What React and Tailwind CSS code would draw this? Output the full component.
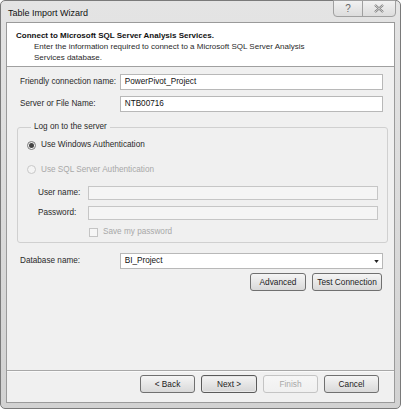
import { useState } from "react";

const font = { fontFamily: '"Liberation Sans", Arial, sans-serif' };

function Btn({ children, w, disabled, focus }) {
  return (
    <button
      className={`h-[18px] ${w} whitespace-nowrap rounded-[3px] border text-[8.3px] leading-none bg-gradient-to-b ${
        disabled
          ? "border-[#c4c4c4] from-[#f6f6f6] to-[#f0f0f0] text-[#a8a8a8]"
          : focus
          ? "border-[#5a5a5a] from-[#f4f4f4] to-[#d6d6d6] text-[#222] shadow-[inset_0_0_0_1px_#e8e8e8]"
          : "border-[#707070] from-[#f5f5f5] to-[#d9d9d9] text-[#222]"
      }`}
    >
      {children}
    </button>
  );
}

function Field({ label, value, combo }) {
  return (
    <div className="flex items-center pl-[3px]">
      <span className="w-[100px] whitespace-nowrap text-[8.2px] text-[#2a2a2a]">{label}</span>
      <div className="flex h-[16px] w-[264px] items-center border border-[#b8b8b8] bg-white pl-[4px] pr-[3px] text-[8.2px] text-[#111]">
        <span className="flex-1">{value}</span>
        {combo && (
          <svg width="5" height="3" viewBox="0 0 6 4">
            <path d="M0 0h6L3 4z" fill="#222" />
          </svg>
        )}
      </div>
    </div>
  );
}

export default function App() {
  const [auth, setAuth] = useState("windows");

  return (
    <div className="h-[412px] w-[403px] bg-white" style={font}>
      <div className="flex h-[409px] w-[401px] flex-col rounded-[5px] border border-[#7a7a7a] bg-gradient-to-b from-[#e4e4e4] to-[#d2d2d2] px-[5px] pb-[5px]">
        {/* Title bar */}
        <div className="flex h-[21px] items-start">
          <span className="mt-[6px] ml-[2px] flex-1 text-[9px] text-[#111]">Table Import Wizard</span>
          <div className="-mt-px mr-[-1px] flex h-[17px] overflow-hidden rounded-b-[4px] border border-[#a0a0a0] bg-gradient-to-b from-[#f2f2f2] to-[#dcdcdc]">
            <div className="flex w-[29px] items-center justify-center border-r border-[#a0a0a0] text-[10px] text-[#666]">
              ?
            </div>
            <div className="flex w-[32px] items-center justify-center">
              <svg width="10" height="9" viewBox="0 0 10 9">
                <path d="M1 1l8 7M9 1L1 8" stroke="#777" strokeWidth="2.2" />
                <path d="M1 1l8 7M9 1L1 8" stroke="#eee" strokeWidth="0.8" />
              </svg>
            </div>
          </div>
        </div>

        {/* Client */}
        <div className="flex flex-1 flex-col border border-[#9a9a9a] bg-[#f0f0f0]">
          <div className="h-[44px] border-b border-[#a0a0a0] bg-white pt-[7px] pl-[9px] text-[8px] leading-[11px] text-[#111]">
            <div className="font-bold">Connect to Microsoft SQL Server Analysis Services.</div>
            <div className="pl-[18px] text-[#2a2a2a]">
              Enter the information required to connect to a Microsoft SQL Server Analysis
              <br />
              Services database.
            </div>
          </div>

          <div className="flex flex-1 flex-col pt-[7px] pl-[10px] pr-[11px]">
            <div className="flex flex-col gap-[6px]">
              <Field label="Friendly connection name:" value="PowerPivot_Project" />
              <Field label="Server or File Name:" value="NTB00716" />
            </div>

            <fieldset className="mt-[9px] h-[122px] rounded-[3px] border border-[#d0d0d0] px-[9px]">
              <legend className="ml-[4px] px-[3px] text-[8.2px] text-[#2a2a2a]">Log on to the server</legend>
              <label className="mt-[6px] flex items-center gap-[5px] text-[8.2px] text-[#2a2a2a]">
                <span className="flex h-[9px] w-[9px] items-center justify-center rounded-full border border-[#7a7a7a] bg-gradient-to-b from-[#e8e8e8] to-white">
                  {auth === "windows" && <span className="h-[5px] w-[5px] rounded-full bg-[#444]" />}
                </span>
                <span onClick={() => setAuth("windows")}>Use Windows Authentication</span>
              </label>
              <label className="mt-[12px] flex items-center gap-[5px] text-[8.2px] text-[#a8a8a8]">
                <span className="h-[9px] w-[9px] rounded-full border border-[#c8c8c8] bg-[#f4f4f4]" />
                <span>Use SQL Server Authentication</span>
              </label>
              <div className="mt-[10px] flex flex-col gap-[6px] pl-[11px]">
                {["User name:", "Password:"].map((l) => (
                  <div key={l} className="flex items-center">
                    <span className="w-[50px] text-[8.2px] text-[#2a2a2a]">{l}</span>
                    <div className="h-[14px] w-[290px] border border-[#c6c6c6] bg-[#f5f5f5]" />
                  </div>
                ))}
                <div className="ml-[51px] flex items-center gap-[5px]">
                  <span className="h-[9px] w-[9px] border border-[#c4c4c4] bg-[#f6f6f6]" />
                  <span className="text-[8.2px] text-[#a8a8a8]">Save my password</span>
                </div>
              </div>
            </fieldset>

            <div className="mt-[10px]">
              <Field label="Database name:" value="BI_Project" combo />
            </div>
            <div className="mt-[4px] flex justify-end gap-[6px] pr-[1px]">
              <Btn w="w-[56px]">Advanced</Btn>
              <Btn w="w-[70px]">Test Connection</Btn>
            </div>
          </div>

          <div className="flex h-[32px] items-start justify-end gap-[6px] border-t border-[#a8a8a8] pt-[4px] pr-[15px] shadow-[inset_0_1px_0_#fafafa]">
            <Btn w="w-[55px]">&lt; Back</Btn>
            <Btn w="w-[56px]" focus>Next &gt;</Btn>
            <Btn w="w-[55px]" disabled>Finish</Btn>
            <Btn w="w-[55px]">Cancel</Btn>
          </div>
        </div>
      </div>
    </div>
  );
}
